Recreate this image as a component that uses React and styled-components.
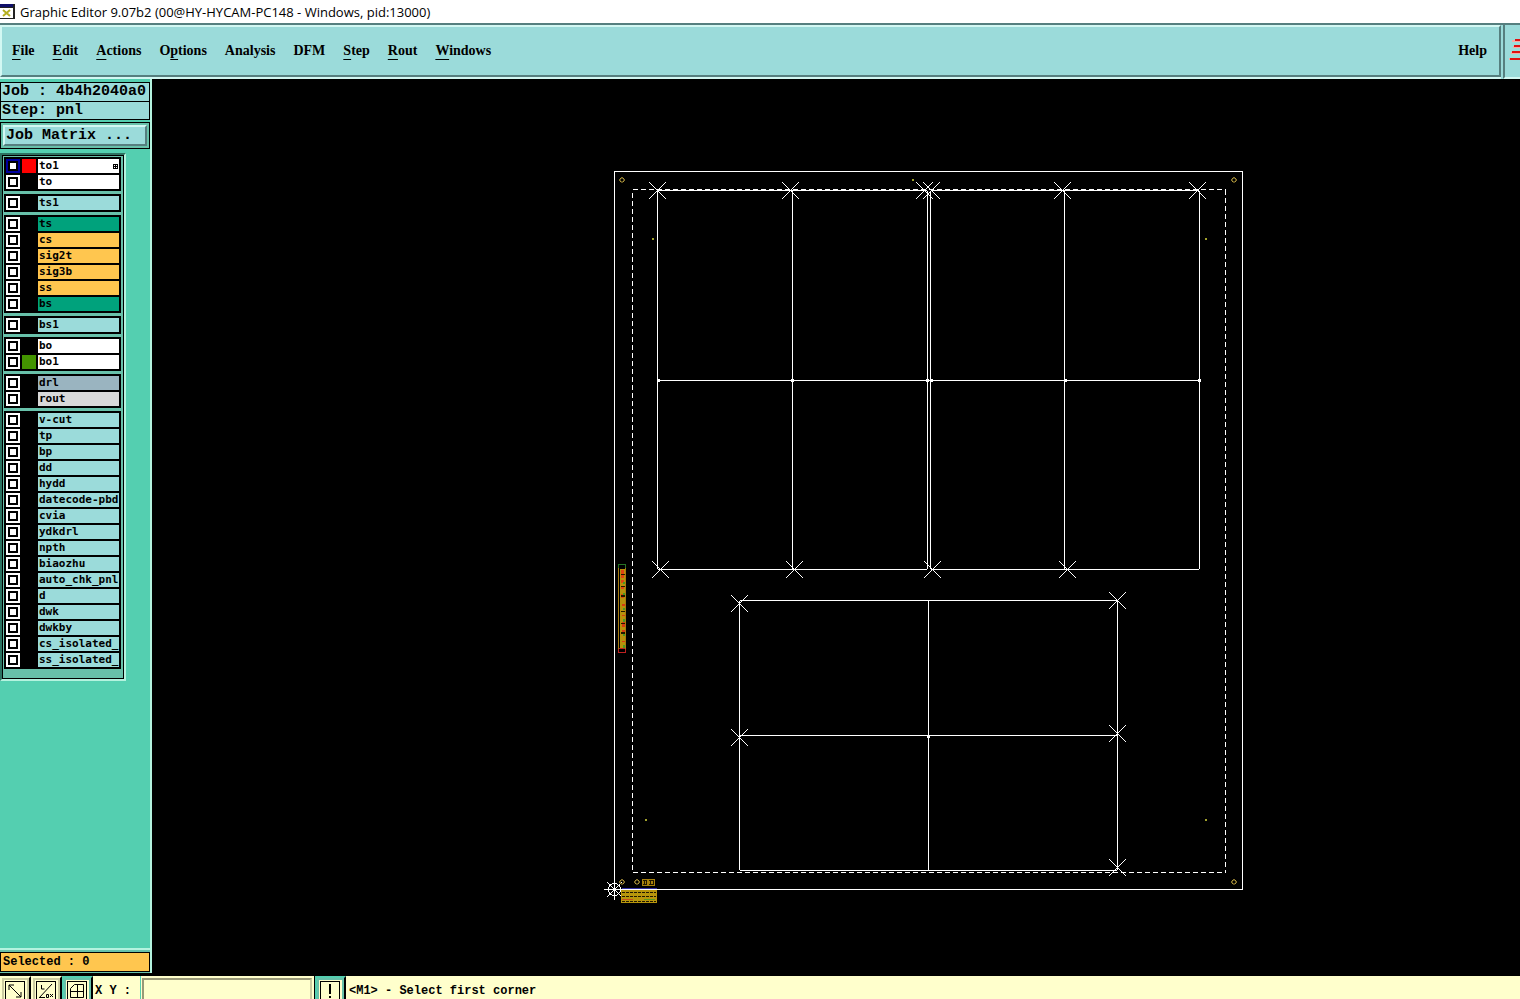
import React from "react";
import styled, { createGlobalStyle } from "styled-components";

const c = {
  aqua: "#9bdbda",
  aquaLight: "#d3f8f3",
  aquaDark: "#567f7f",
  green: "#54cfb0",
  greenLight: "#b4f3df",
  greenDark: "#2d7261",
  greenMid: "#68c1aa",
  cream: "#ffffcc",
  orange: "#ffc64f",
};

const Global = createGlobalStyle`
  *, *::before, *::after { box-sizing: border-box; }
  body { margin: 0; background: #000; color: #000; overflow: hidden; }
  button, input { font: inherit; color: inherit; border-radius: 0; margin: 0; }
`;

const Window = styled.div`
  display: flex;
  flex-direction: column;
  height: 100vh;
  overflow: hidden;
  font: bold 12px/14px "Liberation Mono", monospace;
`;

const TitleBar = styled.header`
  flex: none;
  display: flex;
  align-items: center;
  gap: 5px;
  height: 23px;
  background: #fff;
  font: 13px/18px "Open Sans", "Noto Sans", sans-serif;
  white-space: nowrap;
`;

const Title = styled.h1`
  margin: 0;
  font: inherit;
`;

const TopBar = styled.div`
  flex: none;
  display: flex;
  height: 56px;
  border-top: 2px solid ${c.aquaDark};
  background: ${c.aqua};
  overflow: hidden;
`;

const Menu = styled.nav`
  flex: 1;
  display: flex;
  align-items: center;
  gap: 18px;
  padding: 0 12px 0 10px;
  border: 2px solid;
  border-color: ${c.aquaLight} ${c.aquaDark} ${c.aquaDark} ${c.aquaLight};
  box-shadow: 0 2px ${c.aquaLight};
  margin: 0 2px 2px 0;
  font: bold 14px/20px "Liberation Serif", serif;
`;

const MenuItem = styled.button`
  padding: 0;
  border: 0;
  background: none;
  margin-left: ${(p) => (p.$end ? "auto" : "0")};
`;

const Key = styled.span`
  text-decoration: underline;
  text-decoration-thickness: 1px;
  text-underline-offset: 4px;
`;

const LogoBox = styled.div`
  flex: none;
  width: 17px;
  border-left: 2px solid ${c.aquaDark};
  border-bottom: 2px solid ${c.aquaLight};
  overflow: hidden;
`;

const Body = styled.div`
  flex: 1;
  min-height: 0;
  display: flex;
`;

const Sidebar = styled.aside`
  flex: none;
  display: flex;
  flex-direction: column;
  width: 152px;
  margin-bottom: 3px;
  padding-top: 3px;
  background: ${c.green};
  border-right: 2px solid ${c.greenLight};
`;

const JobInfo = styled.div`
  border: 1px solid #000;
  background: ${c.aqua};
  font-size: 15px;
  line-height: 17px;
`;

const InfoLine = styled.div`
  height: 18px;
  padding-left: 1px;
  white-space: pre;
  & + & { border-top: 1px solid #000; }
`;

const MatrixFrame = styled.div`
  margin-top: 2px;
  padding: 2px;
  border: 1px solid #000;
  background: ${c.greenMid};
`;

const MatrixButton = styled.button`
  display: block;
  width: 100%;
  height: 21px;
  padding: 0 1px;
  border: 2px solid;
  border-color: ${c.aquaLight} ${c.aquaDark} ${c.aquaDark} ${c.aquaLight};
  background: ${c.aqua};
  font-size: 15px;
  line-height: 17px;
  text-align: left;
`;

const LayerPanel = styled.div`
  width: 126px;
  margin-top: 4px;
  border: 2px solid;
  border-color: ${c.greenDark} ${c.greenLight} ${c.greenLight} ${c.greenDark};
`;

const LayerList = styled.div`
  display: flex;
  flex-direction: column;
  gap: 3px;
  padding: 1px 2px 9px 1px;
  border: 1px solid #000;
  background: ${c.greenMid};
`;

const LayerGroup = styled.div`
  display: grid;
  gap: 2px;
  padding: 2px;
  background: #000;
`;

const LayerRow = styled.div`
  display: grid;
  grid-template-columns: 14px 14px 1fr;
  gap: 2px;
  height: 14px;
`;

const Visible = styled.input`
  appearance: none;
  width: 14px;
  height: 14px;
  border: 2px solid #fff;
  background: #fff;
  box-shadow: inset 0 0 0 2px #000;
  &:checked { border-color: #0000a0; }
`;

const Swatch = styled.span`
  background: ${(p) => p.$color || "#000"};
`;

const LayerName = styled.label`
  display: flex;
  justify-content: space-between;
  align-items: center;
  min-width: 0;
  padding-left: 1px;
  background: ${(p) => p.$color};
  font-family: "DejaVu Sans Mono", monospace;
  font-size: 11px;
  line-height: 14px;
  white-space: nowrap;
`;

const SelectedBox = styled.div`
  margin-top: auto;
  padding: 2px 0 1px;
  border-top: 2px solid ${c.greenLight};
  background: ${c.greenMid};
`;

const SelectedText = styled.div`
  height: 20px;
  padding-left: 2px;
  border: 1px solid #000;
  background: ${c.orange};
  line-height: 18px;
`;

const Canvas = styled.main`
  flex: 1;
  min-width: 0;
  background: #000;
`;

const Drawing = styled.svg`
  display: block;
  width: 100%;
  height: 100%;
`;

const StatusBar = styled.footer`
  flex: none;
  display: flex;
  height: 23px;
  background: ${c.cream};
  line-height: 30px;
  overflow: hidden;
`;

const ToolButton = styled.button`
  flex: none;
  width: 31px;
  height: 31px;
  padding: 2px;
  border: 2px solid ${(p) => (p.$on ? c.green : c.cream)};
  border-right-color: #000;
  background: ${(p) => (p.$on ? c.greenMid : "#cccca0")};
  svg { display: block; background: ${c.cream}; }
`;

const XYLabel = styled.label`
  flex: none;
  width: 48px;
  padding-left: 2px;
  border-right: 1px solid ${c.green};
`;

const XYInput = styled.input`
  flex: none;
  width: 170px;
  height: 31px;
  margin: 2px 2px 0 1px;
  border: 2px solid;
  border-color: #999977 #cccca0 ${c.cream} #999977;
  background: ${c.cream};
  outline: none;
`;

const AlertSlot = styled.div`
  flex: none;
  border-left: 1px solid #000;
`;

const Message = styled.output`
  padding-left: 3px;
  white-space: nowrap;
`;

const W = "#ffffff", A = c.aqua, G = "#00a27c", O = c.orange;
const groups = [
  [["to1", W, "#ff0000", true], ["to", W]],
  [["ts1", A]],
  [["ts", G], ["cs", O], ["sig2t", O], ["sig3b", O], ["ss", O], ["bs", G]],
  [["bs1", A]],
  [["bo", W], ["bo1", W, "#439400"]],
  [["drl", "#9ab4c0"], ["rout", "#d9d9d9"]],
  ["v-cut", "tp", "bp", "dd", "hydd", "datecode-pbd", "cvia", "ydkdrl", "npth", "biaozhu", "auto_chk_pnl", "d", "dwk", "dwkby", "cs_isolated_", "ss_isolated_"].map((n) => [n, A]),
];

const menus = [["", "F", "ile"], ["", "E", "dit"], ["", "A", "ctions"], ["O", "p", "tions"], ["Analysis", "", ""], ["DFM", "", ""], ["", "S", "tep"], ["", "R", "out"], ["", "W", "indows"]];

const crosses = [
  [657, 190], [790, 190], [924, 190], [931, 190], [1062, 190], [1197, 190],
  [660, 569], [794, 569], [932, 569], [1067, 569],
  [739, 603], [1117, 600], [739, 737], [1117, 733], [1117, 867],
];
const targets = [[622, 180], [1234, 180], [1234, 882], [622, 882], [637, 882]];
const dots = [[913, 180], [653, 239], [1206, 239], [646, 820], [1206, 820]];

function PanelDrawing() {
  return (
    <Drawing viewBox="152 79 1368 897" aria-label="Panel layout">
      <g fill="none" stroke="#fff" shapeRendering="crispEdges">
        <rect x="614.5" y="171.5" width="628" height="718" />
        <path strokeDasharray="5 3" d="M632.5 189.5H1225.5M632.5 193V872.5M1225.5 189.5V872.5M632.5 872.5H1225.5" />
        <rect x="657.5" y="190.5" width="270" height="379" rx="2" />
        <rect x="930.5" y="190.5" width="269" height="379" rx="2" />
        <path d="M657.5 380.5H1199.5M792.5 190.5V569.5M1064.5 190.5V569.5" />
        <rect x="739.5" y="600.5" width="378" height="270" rx="2" />
        <path d="M739.5 735.5H1117.5M928.5 600.5V870.5" />
        {crosses.map(([x, y]) => (
          <path key={`${x}-${y}`} d={`M${x - 8} ${y - 8}l17 17m0 -17l-17 17`} />
        ))}
        <circle cx="614.5" cy="889.5" r="6" />
        <path d="M604 889.5h21M614.5 879v21M607 882l15 15m0-15l-15 15" />
      </g>
      <g fill="#fff">
        {[[658, 380], [792, 380], [927, 380], [931, 380], [1065, 380], [1199, 380], [928, 736]].map(([x, y]) => (
          <rect key={`${x}-${y}`} x={x - 1} y={y - 1} width="3" height="3" />
        ))}
      </g>
      <g fill="none" stroke="#b39a3c">
        {targets.map(([x, y]) => (
          <path key={`${x}-${y}`} d={`M${x - 1} ${y - 2}h2l1 1v2l-1 1h-2l-1 -1v-2zM${x} ${y - 3}v1M${x - 3} ${y}h1m4 0h1`} />
        ))}
      </g>
      <g fill="#a2a22c">
        {dots.map(([x, y]) => (
          <rect key={`${x}-${y}`} x={x - 1} y={y - 1} width="2" height="2" />
        ))}
      </g>
      <g shapeRendering="crispEdges" fill="none">
        <rect x="620" y="569" width="6" height="80" fill="#b8900b" />
        <path stroke="#e04410" strokeWidth="3" strokeDasharray="8 2 3 4 2 5 4 3" d="M622.5 570V601" />
        <path stroke="#d83a10" strokeWidth="3" strokeDasharray="2 9 1 6 5 3" d="M623.5 604V649" />
        <path stroke="#4a9a20" strokeWidth="2" strokeDasharray="2 9 3 12" d="M624 582V649" />
        <path stroke="#201800" strokeWidth="4" strokeDasharray="1 11 1 8 2 14" d="M623 574V649" />
        <path stroke="#267326" d="M618.5 568.5V564.5H625.5V568.5" />
        <path stroke="#a87c10" d="M618.5 568V649M625.5 568V649" />
        <path stroke="#c02020" d="M618.5 649V652.5H625.5V649M619 648.5H625" />
        <rect x="642" y="879" width="13" height="7" fill="#a8810c" />
        <path stroke="#201800" d="M643 880.5h4m2 0h5M643 884.5h4m2 0h5M644.5 880v5M646.5 880v5M650.5 880v5M653.5 880v5" />
        <path stroke="#3030a0" d="M622 888.5H657" />
        <rect x="621" y="890" width="36" height="13" fill="#b8960c" />
        <path stroke="#201800" strokeDasharray="3 1" d="M622 892.5H656M622 896.5H656M622 901.5H656" />
        <path stroke="#c8501c" d="M622 899.5h11" />
        <path stroke="#5b9a20" d="M644 899.5h11" />
      </g>
    </Drawing>
  );
}

const Glyph = ({ children }) => (
  <svg width="23" height="23" viewBox="0 0 23 23" fill="none" stroke="#000" aria-hidden="true">
    <rect x="1.5" y="1.5" width="19" height="19" />
    {children}
  </svg>
);

export default function App() {
  return (
    <Window>
      <Global />
      <TitleBar>
        <svg width="15" height="15" viewBox="0 0 15 15" aria-hidden="true">
          <rect width="15" height="15" fill="#222" />
          <rect width="13" height="3" fill="#10106a" />
          <rect y="4" width="13" height="10" fill="#fff" />
          <path d="M3 6l7 6m0-6l-7 6" stroke="#b5b020" strokeWidth="2" />
        </svg>
        <Title>Graphic Editor 9.07b2 (00@HY-HYCAM-PC148 - Windows, pid:13000)</Title>
      </TitleBar>
      <TopBar>
        <Menu>
          {menus.map(([a, k, b]) => (
            <MenuItem key={a + k + b}>{a}{k && <Key>{k}</Key>}{b}</MenuItem>
          ))}
          <MenuItem $end>Help</MenuItem>
        </Menu>
        <LogoBox>
          <svg width="15" height="50" viewBox="0 0 15 50" aria-hidden="true">
            <g stroke="#f6aaa5" strokeWidth="2"><path d="M7 16h8M8 22h7M6 28h9M4 34h11" /></g>
            <g stroke="#e01010" strokeWidth="2"><path d="M10 15h5M9 21h6M7 27h8M5 34h10" /></g>
          </svg>
        </LogoBox>
      </TopBar>
      <Body>
        <Sidebar>
          <JobInfo>
            <InfoLine>Job : 4b4h2040a0</InfoLine>
            <InfoLine>Step: pnl</InfoLine>
          </JobInfo>
          <MatrixFrame>
            <MatrixButton>Job Matrix ...</MatrixButton>
          </MatrixFrame>
          <LayerPanel>
            <LayerList>
              {groups.map((rows) => (
                <LayerGroup key={rows[0][0]}>
                  {rows.map(([name, color, swatch, active]) => (
                    <LayerRow key={name}>
                      <Visible type="checkbox" id={name} defaultChecked={!!active} />
                      <Swatch $color={swatch} />
                      <LayerName htmlFor={name} $color={color}>
                        {name}
                        {active && (
                          <svg width="7" height="7" viewBox="0 0 7 7" fill="none" stroke="#000" shapeRendering="crispEdges" aria-hidden="true">
                            <path d="M1.5 1.5h4v4h-4zM3.5 1v5M1 3.5h5" />
                          </svg>
                        )}
                      </LayerName>
                    </LayerRow>
                  ))}
                </LayerGroup>
              ))}
            </LayerList>
          </LayerPanel>
          <SelectedBox>
            <SelectedText>Selected : 0</SelectedText>
          </SelectedBox>
        </Sidebar>
        <Canvas>
          <PanelDrawing />
        </Canvas>
      </Body>
      <StatusBar>
        <ToolButton aria-label="Zoom">
          <Glyph><path d="M5 5l12 12M5 10V5h5M17 12v5h-5" /></Glyph>
        </ToolButton>
        <ToolButton aria-label="Units">
          <Glyph><path d="M4 18L17 4M6.5 5v4h3M4 17.5h6M11.5 14.5h2v3h-2zM15 14l3 3m0-3l-3 3" /></Glyph>
        </ToolButton>
        <ToolButton aria-label="Grid" $on>
          <Glyph><path d="M4.5 17.5v-9l4-4h9v13zM11.5 4v13M4 11.5h13" /></Glyph>
        </ToolButton>
        <XYLabel htmlFor="xy">X Y :</XYLabel>
        <XYInput id="xy" />
        <AlertSlot>
          <ToolButton aria-label="Alert" $on>
            <Glyph><path d="M11 4v10M11 16v2" strokeWidth="2" /></Glyph>
          </ToolButton>
        </AlertSlot>
        <Message>&lt;M1&gt; - Select first corner</Message>
      </StatusBar>
    </Window>
  );
}
